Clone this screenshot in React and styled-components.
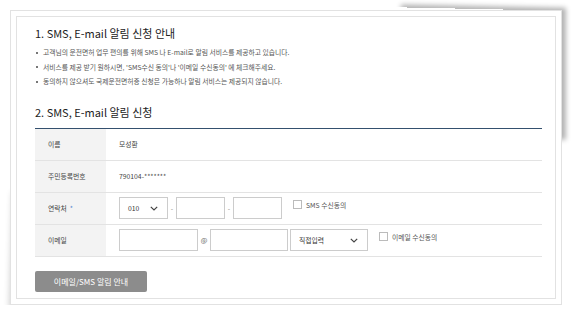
import React from "react";
import styled, { createGlobalStyle } from "styled-components";

const GlobalStyle = createGlobalStyle`
  html {
    background: #ffffff;
  }
  html, body {
    margin: 0;
    padding: 0;
  }
  body {
    font-family: "Noto Sans CJK KR", "Noto Sans", sans-serif;
    color: #333;
  }
`;

const COLORS = {
  TITLE: "#222222",
  TEXT: "#555555",
  LABEL_BG: "#f3f3f3",
  LINE: "#e3e3e3",
  NAVY: "#34506e",
  INPUT: "#cccccc",
  BUTTON: "#8c8c8c",
  STAR: "#4a7fd0",
};

function Chevron() {
  return (
    <svg width="8" height="5" viewBox="0 0 8 5">
      <polyline points="0.8,0.8 4,4 7.2,0.8" fill="none" stroke="#444" strokeWidth="1.2" />
    </svg>
  );
}

function App() {
  return (
    <>
      <GlobalStyle />
      <Frame>
        <Inner>
          <Title>1. SMS, E-mail 알림 신청 안내</Title>
          <Bullets>
            <li>고객님의 운전면허 업무 편의를 위해 SMS 나 E-mail로 알림 서비스를 제공하고 있습니다.</li>
            <li>서비스를 제공 받기 원하시면, 'SMS수신 동의'나 '이메일 수신동의' 에 체크해주세요.</li>
            <li>동의하지 않으셔도 국제운전면허증 신청은 가능하나 알림 서비스는 제공되지 않습니다.</li>
          </Bullets>

          <Title $gap>2. SMS, E-mail 알림 신청</Title>
          <Table>
            <Row>
              <Label>이름</Label>
              <Value>모성환</Value>
            </Row>
            <Row>
              <Label>주민등록번호</Label>
              <Value>790104-*******</Value>
            </Row>
            <Row>
              <Label>연락처 <Star>*</Star></Label>
              <Value>
                <Select $w={49}>
                  <span>010</span>
                  <Chevron />
                </Select>
                <Dash>-</Dash>
                <Input $w={49} />
                <Dash>-</Dash>
                <Input $w={49} />
                <Check>
                  <Box />
                  SMS 수신동의
                </Check>
              </Value>
            </Row>
            <Row>
              <Label>이메일</Label>
              <Value>
                <Input $w={79} />
                <At>@</At>
                <Input $w={78} />
                <Select $w={78} $left={2}>
                  <span>직접입력</span>
                  <Chevron />
                </Select>
                <Check>
                  <Box />
                  이메일 수신동의
                </Check>
              </Value>
            </Row>
          </Table>
          <Button>이메일/SMS 알림 안내</Button>
        </Inner>
      </Frame>
    </>
  );
}

const Frame = styled.div`
  position: relative;
  margin: 10px 0 0 10px;
  width: 552px;
  height: 295px;
  border: 1px solid #e2e2e2;
  background: #fff;
  padding: 5px;
  box-sizing: border-box;

  &::before {
    content: "";
    position: absolute;
    z-index: -1;
    top: -2px;
    right: 0;
    width: 30%;
    height: 45%;
    box-shadow: 5px -3px 5px rgba(0, 0, 0, 0.3);
    transform: skewY(1.2deg);
  }

  &::after {
    content: "";
    position: absolute;
    z-index: -1;
    bottom: 0;
    left: 3px;
    width: 35%;
    height: 40%;
    box-shadow: -3px 5px 6px rgba(0, 0, 0, 0.2);
    transform: skewX(-1.5deg);
  }
`;

const Inner = styled.div`
  height: 100%;
  box-sizing: border-box;
  border: 1px solid #e2e2e2;
  padding: 8px 13px 0 18px;
  display: flex;
  flex-direction: column;
`;

const Title = styled.h2`
  margin: ${(props) => (props.$gap ? "15px" : "0")} 0 0 0;
  font-size: 11px;
  line-height: 16px;
  font-weight: 400;
  color: ${COLORS.TITLE};
`;

const Bullets = styled.ul`
  margin: 4px 0 0 0;
  padding: 0;
  list-style: none;

  li {
    position: relative;
    padding-left: 8px;
    font-size: 6.8px;
    line-height: 14.5px;
    color: ${COLORS.TEXT};
    white-space: nowrap;
  }

  li::before {
    content: "";
    position: absolute;
    left: 1px;
    top: 6.5px;
    width: 2px;
    height: 2px;
    background: #777;
  }
`;

const Table = styled.div`
  margin-top: 8px;
  border-top: 1px solid ${COLORS.NAVY};
  display: flex;
  flex-direction: column;
`;

const Row = styled.div`
  display: grid;
  grid-template-columns: 71px 1fr;
  height: 31px;
  border-bottom: 1px solid ${COLORS.LINE};
`;

const Label = styled.div`
  background: ${COLORS.LABEL_BG};
  display: flex;
  align-items: center;
  gap: 3px;
  padding-left: 13px;
  font-size: 6.8px;
  color: #444;
`;

const Star = styled.span`
  color: ${COLORS.STAR};
`;

const Value = styled.div`
  display: flex;
  align-items: center;
  padding-left: 13px;
  font-size: 6.8px;
  color: #444;
`;

const Input = styled.div`
  width: ${(props) => props.$w}px;
  height: 22px;
  box-sizing: border-box;
  border: 1px solid ${COLORS.INPUT};
  background: #fff;
`;

const Select = styled.div`
  width: ${(props) => props.$w}px;
  height: 22px;
  margin-left: ${(props) => props.$left || 0}px;
  box-sizing: border-box;
  border: 1px solid ${COLORS.INPUT};
  background: #fff;
  display: flex;
  align-items: center;
  justify-content: space-between;
  padding: 0 9px 0 8px;
  font-size: 6.8px;
  color: #333;
`;

const Dash = styled.span`
  width: 8px;
  text-align: center;
  color: #888;
  font-size: 6.8px;
`;

const At = styled.span`
  width: 12px;
  text-align: center;
  color: #666;
  font-size: 7px;
`;

const Check = styled.label`
  display: flex;
  align-items: center;
  align-self: flex-start;
  margin-top: 7px;
  margin-left: 11px;
  gap: 4px;
  font-size: 6.8px;
  color: #555;
`;

const Box = styled.span`
  width: 9px;
  height: 9px;
  box-sizing: border-box;
  border: 1px solid #bbb;
  background: #fff;
`;

const Button = styled.button`
  margin-top: 14px;
  align-self: flex-start;
  width: 112px;
  height: 21px;
  border: none;
  border-radius: 2px;
  background: ${COLORS.BUTTON};
  color: #fff;
  font-family: "Noto Sans CJK KR", "Noto Sans", sans-serif;
  font-size: 8px;
  padding: 0;
`;

export default App;
